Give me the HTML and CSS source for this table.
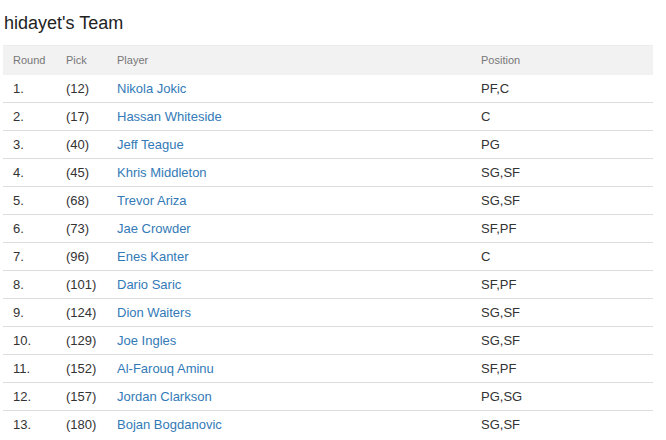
FILE: index.html
```html
<!DOCTYPE html>
<html>
<head>
<meta charset="utf-8">
<link rel="stylesheet" href="styles.css">
</head>
<body>
<h3 class="title">hidayet's Team</h3>
<table class="team">
  <colgroup>
    <col class="c-round"><col class="c-pick"><col class="c-player"><col class="c-pos">
  </colgroup>
  <thead>
    <tr><th>Round</th><th>Pick</th><th>Player</th><th>Position</th></tr>
  </thead>
  <tbody>
    <tr><td>1.</td><td>(12)</td><td><a href="#">Nikola Jokic</a></td><td>PF,C</td></tr>
    <tr><td>2.</td><td>(17)</td><td><a href="#">Hassan Whiteside</a></td><td>C</td></tr>
    <tr><td>3.</td><td>(40)</td><td><a href="#">Jeff Teague</a></td><td>PG</td></tr>
    <tr><td>4.</td><td>(45)</td><td><a href="#">Khris Middleton</a></td><td>SG,SF</td></tr>
    <tr><td>5.</td><td>(68)</td><td><a href="#">Trevor Ariza</a></td><td>SG,SF</td></tr>
    <tr><td>6.</td><td>(73)</td><td><a href="#">Jae Crowder</a></td><td>SF,PF</td></tr>
    <tr><td>7.</td><td>(96)</td><td><a href="#">Enes Kanter</a></td><td>C</td></tr>
    <tr><td>8.</td><td>(101)</td><td><a href="#">Dario Saric</a></td><td>SF,PF</td></tr>
    <tr><td>9.</td><td>(124)</td><td><a href="#">Dion Waiters</a></td><td>SG,SF</td></tr>
    <tr><td>10.</td><td>(129)</td><td><a href="#">Joe Ingles</a></td><td>SG,SF</td></tr>
    <tr><td>11.</td><td>(152)</td><td><a href="#">Al-Farouq Aminu</a></td><td>SF,PF</td></tr>
    <tr><td>12.</td><td>(157)</td><td><a href="#">Jordan Clarkson</a></td><td>PG,SG</td></tr>
    <tr><td>13.</td><td>(180)</td><td><a href="#">Bojan Bogdanovic</a></td><td>SG,SF</td></tr>
  </tbody>
</table>
</body>
</html>
```
FILE: styles.css
```css
html, body {
  margin: 0;
  padding: 0;
  background: #fff;
}
body {
  font-family: "Liberation Sans", Arial, sans-serif;
  color: #333;
  padding: 0 0 0 3px;
}
.title {
  margin: 0;
  padding: 13px 0 0 1px;
  height: 32px;
  font-size: 18px;
  font-weight: normal;
  line-height: 20px;
  color: #222;
}
.team {
  border-collapse: collapse;
  width: 650px;
  table-layout: fixed;
}
.c-round { width: 53px; }
.c-pick { width: 51px; }
.c-player { width: 364px; }
.c-pos { width: 182px; }
.team th {
  background: #f2f2f2;
  color: #777;
  font-size: 11px;
  font-weight: normal;
  text-align: left;
  height: 29px;
  padding: 0 0 0 10px;
  border-top: 1px solid #ececec;
  box-sizing: border-box;
}
.team td {
  font-size: 13px;
  height: 28px;
  padding: 0 0 0 10px;
  border-top: 1px solid #ddd;
  box-sizing: border-box;
}
.team tbody tr:first-child td {
  border-top: none;
}
.team a {
  color: #337ab7;
  text-decoration: none;
}
```
